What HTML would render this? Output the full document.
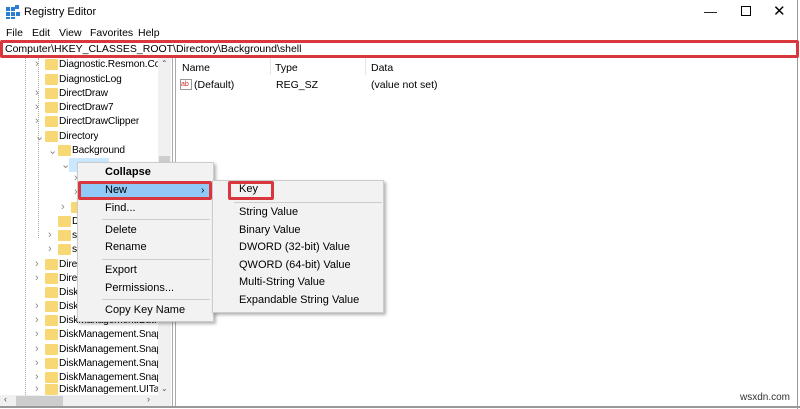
<!DOCTYPE html>
<html><head><style>
*{margin:0;padding:0;box-sizing:border-box}
body{width:800px;height:409px;background:#fff;font-family:"Liberation Sans",sans-serif;font-size:10.5px;color:#000;position:relative;overflow:hidden}
.a{position:absolute;white-space:nowrap}
.f{position:absolute;width:13px;height:11px;background:#f8d775;border-radius:1px}
.chev{position:absolute;color:#888;font-size:11px}
.mi{position:absolute;left:105px;font-size:11px}
.si{position:absolute;left:239px;font-size:11px}
.t{font-size:10.2px;letter-spacing:-0.15px}
</style></head><body>
<svg class="a" style="left:6px;top:5px" width="14" height="14"><rect x="0" y="2" width="4" height="4" fill="#2a7fd4"/><rect x="5" y="2" width="4" height="4" fill="#2a7fd4"/><rect x="0" y="7" width="4" height="4" fill="#2a7fd4"/><rect x="5" y="7" width="4" height="4" fill="#2a7fd4"/><rect x="0" y="12" width="4" height="2" fill="#2a7fd4"/><rect x="5" y="12" width="4" height="2" fill="#2a7fd4"/><rect x="10" y="7" width="4" height="4" fill="#2a7fd4"/><rect x="9" y="0" width="4" height="4" fill="#2a7fd4"/></svg>
<div class="a" style="left:24px;top:6px;font-size:11px">Registry Editor</div>
<div class="a" style="left:704px;top:4px;font-size:13px">&#8212;</div>
<div class="a" style="left:741px;top:6px;width:10px;height:10px;border:1px solid #000"></div>
<div class="a" style="left:773px;top:2px;font-size:15px">&#10005;</div>
<div class="a" style="left:797px;top:0;width:1px;height:409px;background:#999"></div>
<div class="a" style="left:6px;top:27px">File</div>
<div class="a" style="left:32px;top:27px">Edit</div>
<div class="a" style="left:59px;top:27px">View</div>
<div class="a" style="left:90px;top:27px">Favorites</div>
<div class="a" style="left:138px;top:27px">Help</div>
<div class="a" style="left:0;top:40px;width:799px;height:18px;border:3px solid #d9363e;border-radius:2px"></div>
<div class="a" style="left:5px;top:43px">Computer\HKEY_CLASSES_ROOT\Directory\Background\shell</div>
<div class="a" style="left:172px;top:58px;width:1px;height:350px;background:#aaa"></div>
<div class="a" style="left:175px;top:58px;width:1px;height:350px;background:#aaa"></div>
<div class="a" style="left:0;top:406px;width:800px;height:2px;background:#999"></div>
<div class="a" style="left:158px;top:58px;width:13px;height:337px;background:#f0f0f0"></div>
<div class="a" style="left:159px;top:156px;width:11px;height:60px;background:#cdcdcd"></div>
<div class="a" style="left:161px;top:59px;font-size:8px;color:#555">&#8963;</div>
<div class="a" style="left:161px;top:384px;font-size:8px;color:#555">&#8964;</div>
<div class="a" style="left:0;top:395px;width:171px;height:11px;background:#f0f0f0"></div>
<div class="a" style="left:16px;top:396px;width:47px;height:10px;background:#cdcdcd"></div>
<div class="a" style="left:4px;top:394px;font-size:9px;color:#555">&lsaquo;</div>
<div class="a" style="left:147px;top:394px;font-size:9px;color:#555">&rsaquo;</div>
<div class="a" style="left:25px;top:58px;width:1px;height:337px;border-left:1px dotted #aaa"></div>
<div class="a" style="left:38px;top:58px;width:1px;height:180px;border-left:1px dotted #aaa"></div>
<div id="tree"></div>
<script>
var rows=[
[65,45,35,"Diagnostic.Resmon.Cor",">"],[80,45,35,"DiagnosticLog",""],[94,45,35,"DirectDraw",">"],[108,45,35,"DirectDraw7",">"],[122,45,35,"DirectDrawClipper",">"],[137,45,35,"Directory","v"],[151,58,48,"Background","v"],[165,71,61,"shell","v"],[179,84,74,"",">"],[193,84,74,"",">"],[208,71,61,"",">"],[222,58,48,"D",""],[236,58,48,"sh",">"],[250,58,48,"sh",">"],
[265,45,35,"Direc",">"],[279,45,35,"Direc",">"],[293,45,35,"DiskManagement",""],[307,45,35,"DiskManagement",">"],[321,45,35,"DiskManagement.Butt",">"],[335,45,35,"DiskManagement.Snap",">"],[350,45,35,"DiskManagement.Snap",">"],[364,45,35,"DiskManagement.Snap",">"],[378,45,35,"DiskManagement.Snap",">"],[390,45,35,"DiskManagement.UITas",">"]];
var h="";rows.forEach(function(r){
h+='<div class="f" style="left:'+r[1]+'px;top:'+(r[0]-6)+'px"></div>';
if(r[4])h+='<div class="chev" style="left:'+r[2]+'px;top:'+(r[0]-7)+'px">'+(r[4]=="v"?"&#8964;":"&#8250;")+'</div>';
h+='<div class="a t" style="left:'+(r[1]+14)+'px;top:'+(r[0]-6)+'px;max-width:'+(158-r[1]-14)+'px;overflow:hidden">'+r[3]+'</div>';});
document.getElementById('tree').innerHTML=h;
</script>
<div class="a" style="left:69px;top:158px;width:40px;height:14px;background:#cce8ff"></div>
<div class="a" style="left:182px;top:62px">Name</div>
<div class="a" style="left:275px;top:62px">Type</div>
<div class="a" style="left:371px;top:62px">Data</div>
<div class="a" style="left:270px;top:58px;width:1px;height:17px;background:#e5e5e5"></div>
<div class="a" style="left:365px;top:58px;width:1px;height:17px;background:#e5e5e5"></div>
<div class="a" style="left:180px;top:79px;width:12px;height:11px;border:1px solid #999;font-size:7px;color:#c33;line-height:9px;background:#fff">ab</div>
<div class="a" style="left:194px;top:79px">(Default)</div>
<div class="a" style="left:276px;top:79px">REG_SZ</div>
<div class="a" style="left:371px;top:79px">(value not set)</div>
<div class="a" style="left:77px;top:162px;width:137px;height:160px;background:#f2f2f2;border:1px solid #ccc;box-shadow:2px 2px 3px rgba(0,0,0,.3)"></div>
<div class="a" style="left:78px;top:181px;width:134px;height:19px;background:#91c9f7;border:3px solid #d9363e;border-radius:2px"></div>
<div class="mi" style="top:166px;font-weight:bold">Collapse</div>
<div class="mi" style="top:184px">New</div>
<div class="a" style="left:201px;top:184px">&rsaquo;</div>
<div class="mi" style="top:202px">Find...</div>
<div class="a" style="left:102px;top:219px;width:108px;height:1px;background:#ccc"></div>
<div class="mi" style="top:224px">Delete</div>
<div class="mi" style="top:241px">Rename</div>
<div class="a" style="left:102px;top:259px;width:108px;height:1px;background:#ccc"></div>
<div class="mi" style="top:264px">Export</div>
<div class="mi" style="top:282px">Permissions...</div>
<div class="a" style="left:102px;top:299px;width:108px;height:1px;background:#ccc"></div>
<div class="mi" style="top:304px">Copy Key Name</div>
<div class="a" style="left:212px;top:180px;width:172px;height:133px;background:#f2f2f2;border:1px solid #ccc;box-shadow:2px 2px 3px rgba(0,0,0,.3)"></div>
<div class="a" style="left:228px;top:181px;width:46px;height:19px;border:3px solid #d9363e;border-radius:2px"></div>
<div class="si" style="top:183px">Key</div>
<div class="a" style="left:234px;top:202px;width:148px;height:1px;background:#ccc"></div>
<div class="si" style="top:206px">String Value</div>
<div class="si" style="top:224px">Binary Value</div>
<div class="si" style="top:241px">DWORD (32-bit) Value</div>
<div class="si" style="top:259px">QWORD (64-bit) Value</div>
<div class="si" style="top:276px">Multi-String Value</div>
<div class="si" style="top:294px">Expandable String Value</div>
<div class="a" style="left:740px;top:392px;font-size:10px;color:#333">wsxdn.com</div>
</body></html>
